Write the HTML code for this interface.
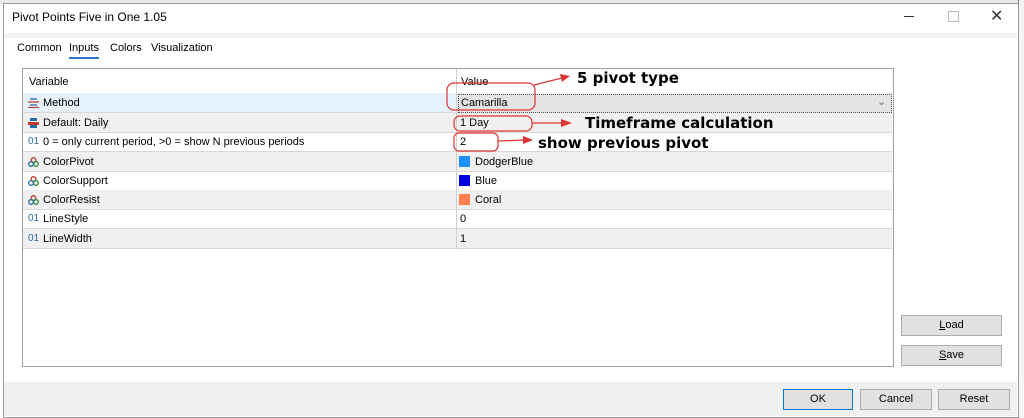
<!DOCTYPE html>
<html><head><meta charset="utf-8"><style>
body{margin:0;width:1024px;height:418px;position:relative;overflow:hidden;background:#fff;font-family:"Liberation Sans",Arial,sans-serif;font-size:11px;color:#000}
.a{position:absolute}
.row{position:absolute;left:23px;width:869px;height:19px;border-bottom:1px solid #d8d8d8}
.row span{position:absolute;top:4px}
.ic{left:5px;font-size:10px;color:#2a6aa8}
.lbl{left:20px}
.val{left:437px}
.sw{position:absolute;left:436px;top:4px;width:11px;height:11px}
.btn{position:absolute;background:#e1e1e1;border:1px solid #adadad;text-align:center;line-height:19px;font-size:11px}
.ci{position:absolute;left:5px;top:5px}
.ann{position:absolute;font:bold 15px 'DejaVu Sans',sans-serif}
</style></head><body>
<div class="a" style="left:0;top:0;width:1024px;height:4px;background:#e8e8e8"></div>
<div class="a" style="left:1018px;top:0;width:6px;height:418px;background:#f4f4f4;border-left:1px solid #777"></div>
<div class="a" style="left:3px;top:3px;width:1014px;height:413px;background:#fff;border:1px solid #9a9a9a"></div>
<div class="a" style="left:4px;top:33px;width:1013px;height:5px;background:#f3f3f3"></div>
<div class="a" style="left:12px;top:10px;font-size:12px">Pivot Points Five in One 1.05</div>
<div class="a" style="left:904px;top:16px;width:10px;height:1px;background:#333"></div>
<div class="a" style="left:948px;top:11px;width:9px;height:9px;border:1px solid #bbb"></div>
<div class="a" style="left:990px;top:6px;font-size:16px;color:#333">✕</div>
<div class="a" style="left:17px;top:42px">Common</div>
<div class="a" style="left:69px;top:42px">Inputs</div>
<div class="a" style="left:69px;top:57px;width:30px;height:2px;background:#2a78c8"></div>
<div class="a" style="left:110px;top:42px">Colors</div>
<div class="a" style="left:151px;top:42px">Visualization</div>
<div class="a" style="left:22px;top:68px;width:870px;height:297px;border:1px solid #a0a0a0;background:#fff"></div>
<div class="a" style="left:29px;top:76px">Variable</div>
<div class="a" style="left:461px;top:76px">Value</div>
<div class="row" style="top:93px;background:#e5f1fb"><svg class="ci" width="11" height="10"><g stroke-width="1.3"><line x1="2" y1="1" x2="9" y2="1" stroke="#2a6aa8"/><line x1="0" y1="4" x2="11" y2="4" stroke="#c0392b"/><line x1="2" y1="7" x2="9" y2="7" stroke="#2a6aa8"/><line x1="0" y1="9.5" x2="11" y2="9.5" stroke="#c0392b"/></g></svg><span class="lbl">Method</span></div>
<div class="a" style="left:458px;top:94px;width:432px;height:17px;background:#e4e4e4;border:1px dotted #555"></div>
<div class="a" style="left:461px;top:97px">Camarilla</div>
<div class="a" style="left:877px;top:95px;color:#666">⌄</div>
<div class="row" style="top:113px;background:#f0f0f0"><svg class="ci" width="11" height="10"><rect x="2" y="0" width="7" height="3" fill="#2a6aa8"/><rect x="0" y="4" width="11" height="3" fill="#c0392b"/><rect x="2" y="7" width="7" height="3" fill="#2a6aa8"/></svg><span class="lbl">Default: Daily</span><span class="val" style="left:437px">1 Day</span></div>
<div class="row" style="top:132px"><span class="ic">01</span><span class="lbl">0 = only current period, &gt;0 = show N previous periods</span><span class="val">2</span></div>
<div class="row" style="top:152px;background:#f0f0f0"><svg class="ci" width="11" height="10"><g fill="none" stroke-width="1.3"><circle cx="5.5" cy="3" r="2.3" stroke="#c0392b"/><circle cx="3" cy="7" r="2.3" stroke="#2a6aa8"/><circle cx="8" cy="7" r="2.3" stroke="#2a8a3a"/></g></svg><span class="lbl">ColorPivot</span><i class="sw" style="background:#1e90ff"></i><span class="val" style="left:452px">DodgerBlue</span></div>
<div class="row" style="top:171px"><svg class="ci" width="11" height="10"><g fill="none" stroke-width="1.3"><circle cx="5.5" cy="3" r="2.3" stroke="#c0392b"/><circle cx="3" cy="7" r="2.3" stroke="#2a6aa8"/><circle cx="8" cy="7" r="2.3" stroke="#2a8a3a"/></g></svg><span class="lbl">ColorSupport</span><i class="sw" style="background:#0000e0"></i><span class="val" style="left:452px">Blue</span></div>
<div class="row" style="top:190px;background:#f0f0f0"><svg class="ci" width="11" height="10"><g fill="none" stroke-width="1.3"><circle cx="5.5" cy="3" r="2.3" stroke="#c0392b"/><circle cx="3" cy="7" r="2.3" stroke="#2a6aa8"/><circle cx="8" cy="7" r="2.3" stroke="#2a8a3a"/></g></svg><span class="lbl">ColorResist</span><i class="sw" style="background:#ff7f50"></i><span class="val" style="left:452px">Coral</span></div>
<div class="row" style="top:209px"><span class="ic">01</span><span class="lbl">LineStyle</span><span class="val">0</span></div>
<div class="row" style="top:229px;background:#f0f0f0"><span class="ic">01</span><span class="lbl">LineWidth</span><span class="val">1</span></div>
<div class="a" style="left:456px;top:69px;width:1px;height:180px;background:#d0d0d0"></div>
<svg class="a" style="left:0;top:0" width="1024" height="418">
<g fill="none" stroke="#d33" stroke-width="1.2">
<rect x="447" y="83" width="88" height="27" rx="7"/>
<rect x="454" y="116" width="78" height="15" rx="6"/>
<rect x="454" y="133" width="44" height="18" rx="5"/>
<line x1="534" y1="85" x2="562" y2="78"/>
<line x1="532" y1="123" x2="562" y2="123"/>
<line x1="498" y1="141" x2="525" y2="140"/>
</g>
<g fill="#d33">
<polygon points="570,76 560,74 562,82"/>
<polygon points="572,123 561,119 561,127"/>
<polygon points="533,140 523,136 523,144"/>
</g>
</svg>
<div class="ann" style="left:577px;top:69px">5 pivot type</div>
<div class="ann" style="left:585px;top:114px">Timeframe calculation</div>
<div class="ann" style="left:538px;top:134px">show previous pivot</div>
<div class="btn" style="left:901px;top:315px;width:99px;height:19px"><u>L</u>oad</div>
<div class="btn" style="left:901px;top:345px;width:99px;height:19px"><u>S</u>ave</div>
<div class="a" style="left:4px;top:382px;width:1013px;height:34px;background:#f0f0f0"></div>
<div class="btn" style="left:783px;top:389px;width:68px;height:19px;border:1px solid #0078d7">OK</div>
<div class="btn" style="left:860px;top:389px;width:70px;height:19px">Cancel</div>
<div class="btn" style="left:938px;top:389px;width:70px;height:19px">Reset</div>
</body></html>
